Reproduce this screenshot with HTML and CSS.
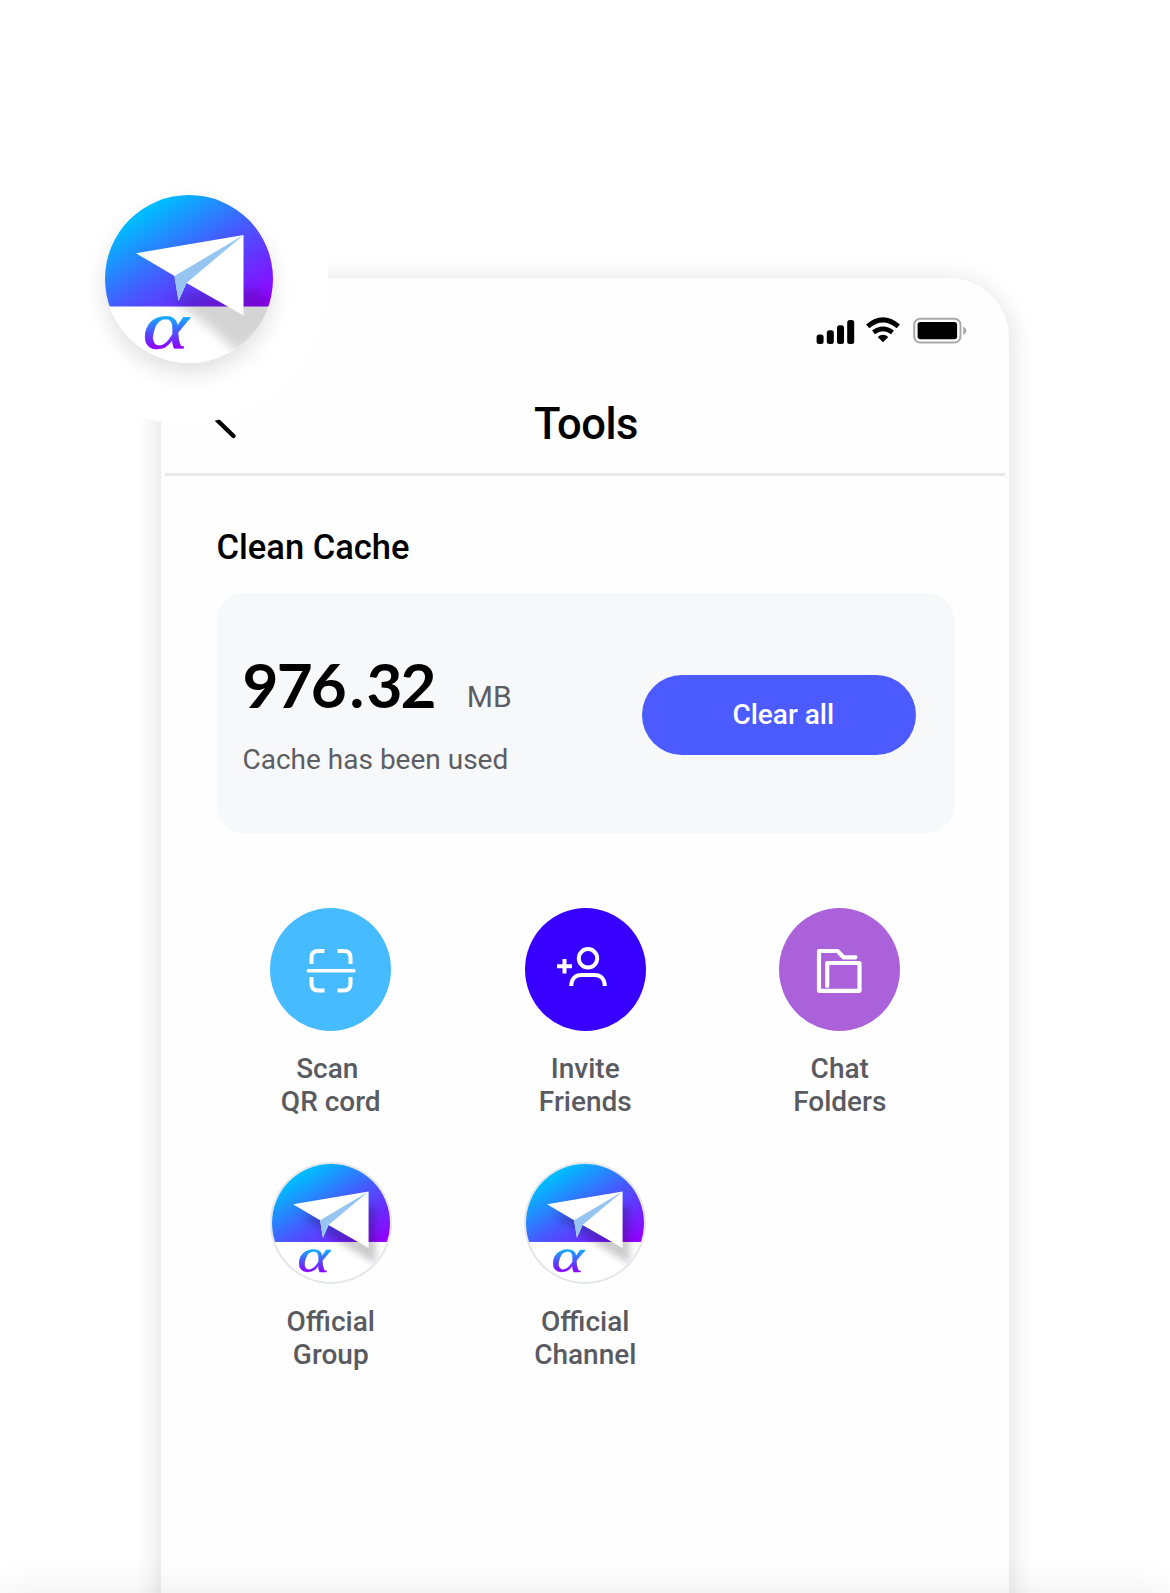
FILE: index.html
```html
<!DOCTYPE html>
<html lang="en">
<head>
<meta charset="utf-8">
<title>Tools</title>
<link rel="stylesheet" href="styles.css">
</head>
<body>
<svg class="defs" width="0" height="0" aria-hidden="true">
  <defs>
    <linearGradient id="sky" gradientUnits="userSpaceOnUse" x1="20" y1="30" x2="96" y2="150">
      <stop offset="0" stop-color="#00bbff"/>
      <stop offset=".45" stop-color="#4659ff"/>
      <stop offset=".68" stop-color="#6433ff"/>
      <stop offset="1" stop-color="#9400ff"/>
    </linearGradient>
    <linearGradient id="ink" gradientUnits="userSpaceOnUse" x1="0" y1="-37" x2="0" y2="0">
      <stop offset="0" stop-color="#0cb4ff"/>
      <stop offset=".5" stop-color="#4a55ff"/>
      <stop offset="1" stop-color="#9000ff"/>
    </linearGradient>
    <clipPath id="disc"><circle cx="84" cy="84" r="84"/></clipPath>
    <filter id="soft" x="-30%" y="-30%" width="160%" height="160%"><feGaussianBlur stdDeviation="6"/></filter>
    <filter id="softSmall" x="-30%" y="-30%" width="160%" height="160%"><feGaussianBlur stdDeviation="5"/></filter>
    <g id="plane">
      <path d="M31 58.300L138.500 40V120.500L81.500 88L73.500 106L69.500 81Z" fill="#fff"/>
      <path d="M138.500 40L69.500 81L73.500 106L81.500 88Z" fill="#97c5f1"/>
    </g>
  </defs>
</svg>

<main class="page">
  <section class="phone">
    <div class="status">
      <svg width="152" height="30" viewBox="815 315 152 30">
        <g>
          <rect x="816.600" y="334.500" width="7" height="9.500" rx="2.500"/>
          <rect x="826.800" y="330.200" width="7" height="13.800" rx="2.500"/>
          <rect x="837" y="325.200" width="7" height="18.800" rx="2.500"/>
          <rect x="847.200" y="320" width="7" height="24" rx="2.500"/>
        </g>
        <path d="M867.700 326.300Q883 313.300 898.300 326.300" fill="none" stroke="#000" stroke-width="5"/>
        <path d="M873.500 332.300Q883 325.300 892.500 332.300" fill="none" stroke="#000" stroke-width="4.600"/>
        <path d="M877.700 337Q883 332.500 888.300 337L883 342.300Z"/>
        <rect x="914.200" y="318.800" width="46.300" height="23.800" rx="6" fill="none" stroke="#a9a9a9" stroke-width="2"/>
        <rect x="917.600" y="322" width="39.500" height="17.300" rx="2.800"/>
        <path d="M963.200 326.500Q966.500 328.300 966.500 330.700Q966.500 333 963.200 335Z" fill="#a9a9a9"/>
      </svg>
    </div>
    <header class="header">
      <svg class="back" width="22" height="34" viewBox="0 0 22 34" fill="none" stroke="#000" stroke-width="4.400" stroke-linecap="round"><path d="M17.500 31L0 14L14 0"/></svg>
      <h1 class="title">Tools</h1>
    </header>
    <div class="content">
      <h2 class="section-title">Clean Cache</h2>
      <div class="card">
        <div class="usage">
          <div class="amount"><span class="number">976<span class="point">.</span>32</span><span class="unit">MB</span></div>
          <p class="caption">Cache has been used</p>
        </div>
        <button class="clear" type="button">Clear all</button>
      </div>
    </div>
    <div class="grid">
      <div class="tool">
        <div class="icon icon-scan">
          <svg width="121" height="124" viewBox="0 0 121 124" fill="none" stroke="#fff" stroke-width="4">
            <path d="M41.500 56V49.500Q41.500 43 48 43H54.500M67.500 43H74Q80.500 43 80.500 49.500V56M80.500 69V75.500Q80.500 82.500 74 82.500H67.500M54.500 82.500H48Q41.500 82.500 41.500 75.500V69"/>
            <path d="M38.300 62.700H84" stroke-width="3.400" stroke-linecap="round"/>
          </svg>
        </div>
        <p class="label">Scan&nbsp;<br>QR cord</p>
      </div>
      <div class="tool">
        <div class="icon icon-invite">
          <svg width="121" height="124" viewBox="0 0 121 124" fill="none" stroke="#fff" stroke-width="4">
            <circle cx="63" cy="50.300" r="9.200"/>
            <path d="M46.200 78C46.200 70.500 51 67 56 67H70C75 67 79.800 70.500 79.800 78"/>
            <path d="M32 58.300H47M39.500 51V65.500"/>
          </svg>
        </div>
        <p class="label">Invite<br>Friends</p>
      </div>
      <div class="tool">
        <div class="icon icon-folders">
          <svg width="121" height="124" viewBox="0 0 121 124" fill="none" stroke="#fff" stroke-width="4.200" stroke-linecap="round" stroke-linejoin="round">
            <path d="M76.500 49.300H64.500L58.500 43H40V82.800H80.500V55H48.200V78"/>
          </svg>
        </div>
        <p class="label">Chat<br>Folders</p>
      </div>
      <div class="tool">
        <div class="icon icon-logo">
          <svg width="118" height="118" viewBox="0 0 168 168">
            <g clip-path="url(#disc)">
              <rect width="168" height="168" fill="#fff"/>
              <rect width="168" height="111" fill="url(#sky)"/>
              <path d="M40 74L148 60V143L84 104L72 94Z" fill="#000" opacity=".2" filter="url(#softSmall)"/>
            </g>
            <use href="#plane" x="-1" y="-1"/>
            <text class="alpha" transform="translate(36 154) scale(1.140 .89)" fill="url(#ink)" stroke="url(#ink)">α</text>
          </svg>
        </div>
        <p class="label">Official<br>Group</p>
      </div>
      <div class="tool">
        <div class="icon icon-logo">
          <svg width="118" height="118" viewBox="0 0 168 168">
            <g clip-path="url(#disc)">
              <rect width="168" height="168" fill="#fff"/>
              <rect width="168" height="111" fill="url(#sky)"/>
              <path d="M40 74L148 60V143L84 104L72 94Z" fill="#000" opacity=".2" filter="url(#softSmall)"/>
            </g>
            <use href="#plane" x="-1" y="-1"/>
            <text class="alpha" transform="translate(36 154) scale(1.140 .89)" fill="url(#ink)" stroke="url(#ink)">α</text>
          </svg>
        </div>
        <p class="label">Official<br>Channel</p>
      </div>
    </div>
  </section>

  <div class="badge">
    <svg class="badge-logo" width="168" height="168" viewBox="0 0 168 168">
      <g clip-path="url(#disc)">
        <rect width="168" height="168" fill="#fff"/>
        <rect width="168" height="111.500" fill="url(#sky)"/>
        <path d="M62 100L150 94L180 120L134 158L104 132Z" fill="#000" opacity=".17" filter="url(#soft)"/>
      </g>
      <use href="#plane"/>
      <text class="alpha" transform="translate(37.500 153) scale(1.130 .87)" fill="url(#ink)" stroke="url(#ink)">α</text>
    </svg>
  </div>
  <div class="fade"></div>
</main>
</body>
</html>
```
FILE: styles.css
```css
* { box-sizing: border-box; }

body {
  margin: 0;
  background: #fff;
  font-family: Roboto, "Liberation Sans", sans-serif;
  color: #000;
}

h1, h2, p { margin: 0; font-weight: 500; }
svg { display: block; overflow: visible; }
.defs { position: absolute; }

.page {
  position: relative;
  height: 1593px;
  padding: 278px 161px 0;
  overflow: hidden;
}

.phone {
  width: 848px;
  height: 1400px;
  border-radius: 60px 60px 0 0;
  background: #fefefe;
  box-shadow: 0 5px 28px rgba(0, 0, 0, .15);
}

.status {
  display: flex;
  justify-content: flex-end;
  height: 95px;
  padding: 37px 42px 0 0;
}

.header {
  display: grid;
  grid-template-columns: 1fr auto 1fr;
  height: 103px;
  margin: 0 4px;
  border-bottom: 3px solid #e8e8e8;
}

.back { margin: 32px 0 0 51px; }
.title { margin-top: 27px; padding-left: 2px; font-size: 43.500px; line-height: 50px; letter-spacing: -.5px; }

.content { padding: 51px 55px 0 55.500px; }
.section-title { font-size: 34.500px; line-height: 40px; }

.card {
  display: flex;
  justify-content: space-between;
  align-items: flex-start;
  height: 240px;
  margin-top: 26px;
  padding: 61px 38.500px 0 26px;
  border-radius: 27px;
  background: #f7f8fa;
}

.amount { display: flex; align-items: baseline; gap: 32px; height: 60px; }
.number { font: 700 62px/60px Lato, sans-serif; letter-spacing: -1.800px; }
.point { padding: 0 4px 0 4.500px; }
.unit { font-size: 30px; line-height: 26px; color: #5d5d64; position: relative; top: -1px; }
.caption { margin-top: 28px; font-size: 28px; font-weight: 400; line-height: 36px; color: #5d5d64; }

.clear {
  width: 274px;
  height: 80px;
  margin-top: 20.500px;
  padding: 1px 0 0 9.500px;
  border: 0;
  border-radius: 40px;
  background: #4b5bff;
  color: #fff;
  font: 500 28px/36px Roboto, sans-serif;
}

.grid {
  display: grid;
  grid-template-columns: repeat(3, 254.500px);
  row-gap: 44px;
  margin: 75px 0 0 42.500px;
}

.tool { display: flex; flex-direction: column; align-items: center; }

.icon {
  display: flex;
  align-items: center;
  justify-content: center;
  width: 121px;
  height: 123px;
  border-radius: 50%;
}
.icon-scan { background: #47bbff; }
.icon-invite { background: #3700ff; }
.icon-folders { background: #aa61da; }
.icon-logo { width: 122px; height: 122px; background: #e4e6ea; }

.label {
  margin-top: 22px;
  font-size: 28px;
  line-height: 32.500px;
  text-align: center;
  color: #5a5a61;
}

.alpha {
  font-family: "Liberation Serif", serif;
  font-style: italic;
  font-size: 78px;
  stroke-width: .6px;
}

.badge {
  position: absolute;
  left: 42px;
  top: 138px;
  width: 286px;
  height: 286px;
  padding: 57px 0 0 63px;
  border-radius: 50%;
  background: #fff;
}
.badge-logo {
  border-radius: 50%;
  box-shadow: 0 10px 22px rgba(0, 0, 0, .12);
}

.fade {
  position: absolute;
  left: 0;
  top: 1593px;
  width: 1170px;
  height: 60px;
  box-shadow: 0 0 40px rgba(0, 0, 0, .08);
}
```
